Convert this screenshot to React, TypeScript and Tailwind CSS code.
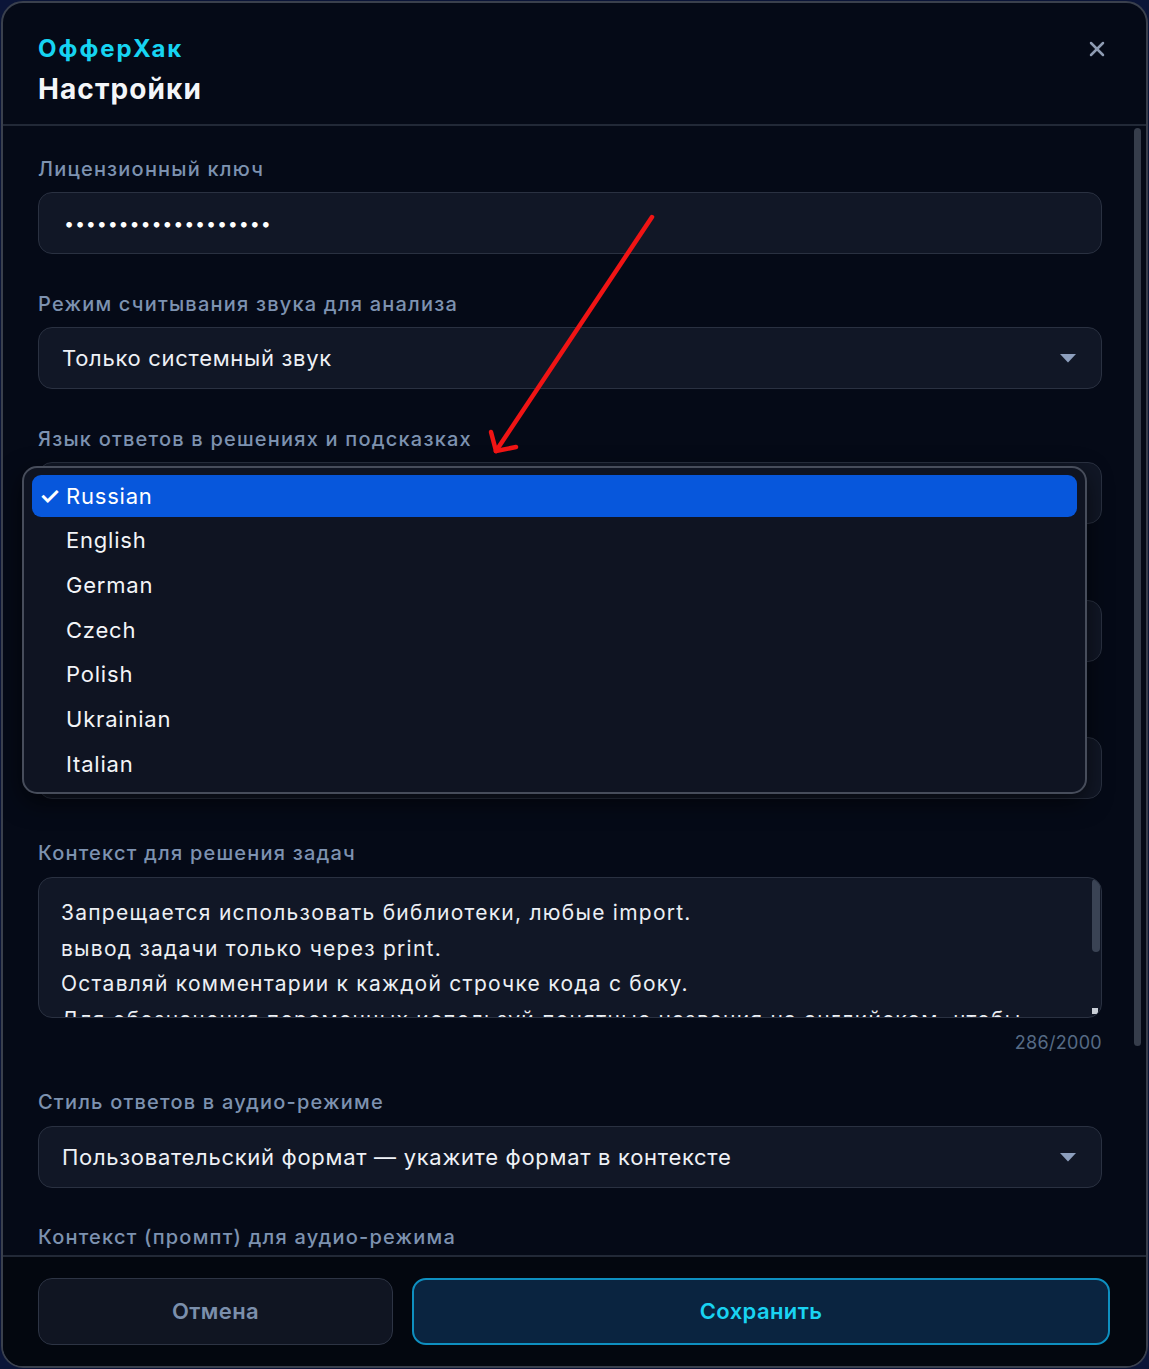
import { X } from "lucide-react";

const languages: string[] = [
  'Russian',
  'English',
  'German',
  'Czech',
  'Polish',
  'Ukrainian',
  'Italian',
];

const contextLines: string[] = [
  'Запрещается использовать библиотеки, любые import.',
  'вывод задачи только через print.',
  'Оставляй комментарии к каждой строчке кода с боку.',
  'Для обозначения переменных используй понятные названия на английском, чтобы',
];

const Caret = () => (
  <svg width="18" height="10" viewBox="0 0 18 10" className="shrink-0">
    <path d="M1 1 H17 L9 9.5 Z" fill="#8d9fbd" />
  </svg>
);

const Label = ({ text, className }: { text: string; className?: string }) => (
  <p className={"h-[24px] text-[20px] leading-[24px] font-medium tracking-[1.2px] text-[#7d92b0] " + (className ?? '')}>
    {text}
  </p>
);

const SelectBox = ({ value }: { value: string }) => (
  <div className="flex items-center justify-between h-[62px] rounded-[14px] border border-[#2a3141] bg-[#111726] pl-[23px] pr-[24px]">
    <span className="text-[22px] tracking-[0.7px] text-[#eef1f6]">{value}</span>
    <Caret />
  </div>
);

const LanguageMenu = () => (
  <div className="absolute top-[4px] left-[-16px] w-[1065px] rounded-[15px] border-2 border-[#474d5b] bg-[#0f1422] px-[8px] py-[7px] flex flex-col gap-[2.7px] shadow-[0_8px_24px_rgba(0,0,0,0.6)] z-10">
    {languages.map((lang, index) => (
      <div
        key={index}
        className={
          index === 0
            ? "flex items-center h-[42px] rounded-[9px] bg-[#0757dc] text-white"
            : "flex items-center h-[42px] rounded-[9px] text-[#f3f5f8]"
        }
      >
        <span className="w-[34px] pl-[7px] text-[24px] font-semibold leading-none">{index === 0 ? '✓' : ''}</span>
        <span className="text-[22px] tracking-[0.8px]">{lang}</span>
      </div>
    ))}
  </div>
);

const App = () => {
  return (
    <div className="relative w-[1149px] h-[1369px] bg-[#0b1538] font-['Inter','Noto_Sans',sans-serif] p-[1px]">
      <div className="flex flex-col h-[1367px] rounded-[22px] border-2 border-[#3a404d] bg-[#050a17] overflow-hidden">
        <header className="relative flex flex-col px-[35px] pt-[31px] h-[123px] border-b-2 border-[#222937] shrink-0">
          <p className="text-[24px] leading-[30px] font-bold tracking-[2px] text-[#16d4f2]">ОфферХак</p>
          <p className="mt-[8px] text-[28px] leading-[34px] font-bold tracking-[1.1px] text-[#f4f6f9]">Настройки</p>
          <X className="absolute top-[34px] right-[37px] text-[#8e9bb2]" size={24} strokeWidth={2.5} />
        </header>

        <div className="flex flex-1 min-h-0">
          <main className="flex-1 min-w-0 overflow-hidden pl-[35px] pr-[32px] pt-[31px]">
            <Label text="Лицензионный ключ" />
            <div className="mt-[11px] flex items-center h-[62px] rounded-[14px] border border-[#2a3141] bg-[#111726] pl-[25px]">
              <span className="text-[18px] tracking-[0.8px] text-white">{'•'.repeat(19)}</span>
            </div>

            <Label text="Режим считывания звука для анализа" className="mt-[38px]" />
            <div className="mt-[11px]">
              <SelectBox value="Только системный звук" />
            </div>

            <Label text="Язык ответов в решениях и подсказках" className="mt-[38px]" />
            <div className="relative mt-[11px]">
              <SelectBox value="" />
              <LanguageMenu />
            </div>

            <Label text="" className="mt-[41px]" />
            <div className="mt-[11px]">
              <SelectBox value="" />
            </div>

            <Label text="" className="mt-[40px]" />
            <div className="mt-[11px]">
              <SelectBox value="" />
            </div>

            <Label text="Контекст для решения задач" className="mt-[42px]" />
            <div className="relative mt-[12px] h-[141px] rounded-[14px] border border-[#2a3141] bg-[#111726] overflow-hidden">
              <div className="pl-[22px] pr-[30px] pt-[17px] text-[21px] leading-[35.5px] tracking-[1.25px] text-[#eceff4] whitespace-nowrap">
                {contextLines.map((line, index) => (
                  <p key={index}>{line}</p>
                ))}
              </div>
              <div className="absolute top-[1px] right-[1px] w-[8px] h-[73px] rounded-full bg-[#3a4354]" />
              <div className="absolute bottom-[3px] right-[3px] w-[6px] h-[6px] bg-[#c9ced6]" />
            </div>
            <p className="mt-[14px] text-right text-[18px] leading-[22px] tracking-[0.3px] text-[#566a85]">286/2000</p>

            <Label text="Стиль ответов в аудио-режиме" className="mt-[36px]" />
            <div className="mt-[12px]">
              <SelectBox value="Пользовательский формат — укажите формат в контексте" />
            </div>

            <Label text="Контекст (промпт) для аудио-режима" className="mt-[37px]" />
          </main>
          <aside className="w-[12px] shrink-0 pt-[2px] pr-[3px]">
            <div className="w-[7px] h-[918px] rounded-full bg-[#363d4b]" />
          </aside>
        </div>

        <footer className="flex gap-[19px] h-[111px] shrink-0 border-t-2 border-[#222937] bg-[#03070f] pl-[35px] pr-[36px] pt-[21px]">
          <button className="w-[355px] h-[67px] rounded-[14px] border border-[#2d3444] bg-[#101522] text-[22px] font-semibold tracking-[0.4px] text-[#7b8fac]">
            Отмена
          </button>
          <button className="flex-1 h-[67px] rounded-[14px] border-2 border-[#0e8fc0] bg-[#0a2440] text-[22px] font-semibold tracking-[0.4px] text-[#19d3f2]">
            Сохранить
          </button>
        </footer>
      </div>

      <svg className="absolute inset-0 pointer-events-none z-20" width="1149" height="1369" viewBox="0 0 1149 1369">
        <g stroke="#f01414" strokeWidth="4.5" strokeLinecap="round" fill="none">
          <path d="M652 217 L496 451" />
          <path d="M496 451 L491 432" />
          <path d="M496 451 L516 447" />
        </g>
      </svg>
    </div>
  );
};

export default App;
